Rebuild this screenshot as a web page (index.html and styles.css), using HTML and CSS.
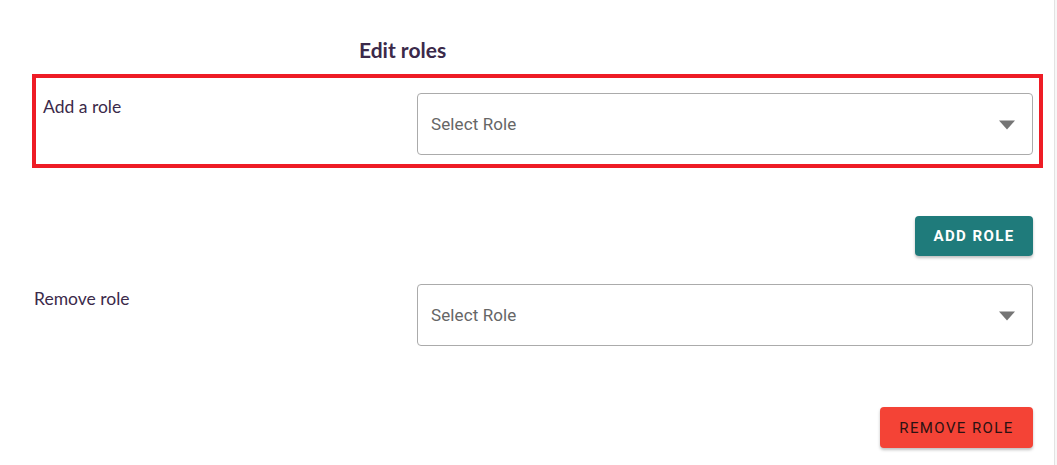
FILE: index.html
```html
<!DOCTYPE html>
<html lang="en">
<head>
<meta charset="utf-8">
<title>Edit roles</title>
<link rel="stylesheet" href="styles.css">
</head>
<body>
<div class="page">
  <h2 class="title">Edit roles</h2>

  <div class="row row-highlight">
    <label class="label">Add a role</label>
    <div class="select">
      <span class="placeholder">Select Role</span>
      <svg class="arrow" width="18" height="10" viewBox="0 0 18 10"><path d="M1 0.5 H17 L9 9.5 Z" fill="#757575"/></svg>
    </div>
  </div>

  <div class="actions actions-add">
    <button class="btn btn-add">Add role</button>
  </div>

  <div class="row">
    <label class="label">Remove role</label>
    <div class="select">
      <span class="placeholder">Select Role</span>
      <svg class="arrow" width="18" height="10" viewBox="0 0 18 10"><path d="M1 0.5 H17 L9 9.5 Z" fill="#757575"/></svg>
    </div>
  </div>

  <div class="actions actions-remove">
    <button class="btn btn-remove">Remove role</button>
  </div>
</div>
</body>
</html>
```

FILE: styles.css
```css
html, body {
  margin: 0;
  padding: 0;
  background: #f7f7f7;
}

.page {
  width: 1055px;
  height: 465px;
  box-sizing: border-box;
  background: #ffffff;
  border-right: 1px solid #e2e2e2;
  padding: 0 22px 0 34px;
  font-family: Lato, "Noto Sans", sans-serif;
  color: #3b2a4a;
}

.title {
  margin: 0;
  padding: 37px 0 0 325px;
  font-size: 21px;
  line-height: 25px;
  font-weight: 700;
  color: #3b2a4a;
  height: 37px;
}

.row {
  display: grid;
  grid-template-columns: 383px 616px;
  align-items: start;
}

.row-highlight {
  margin-left: -2px;
  width: 1011px;
  box-sizing: border-box;
  border: 4px solid #ee1c25;
  padding: 15px 6px 9px 7px;
  grid-template-columns: 374px 616px;
}

.label {
  font-size: 17.5px;
  line-height: 24px;
  padding-top: 2px;
}

.row:not(.row-highlight) .label {
  padding-top: 3px;
}

.select {
  height: 62px;
  box-sizing: border-box;
  border: 1px solid #ababab;
  border-radius: 4px;
  display: flex;
  align-items: center;
  justify-content: space-between;
  padding: 0 16px 0 13px;
  background: #fff;
}

.placeholder {
  font-family: Roboto, "Noto Sans", sans-serif;
  font-size: 17px;
  letter-spacing: 0.1px;
  color: #666666;
}

.arrow {
  display: block;
  margin-top: 2px;
}

.actions {
  display: flex;
  justify-content: flex-end;
  width: 999px;
}

.actions-add {
  padding-top: 48px;
  height: 40px;
  margin-bottom: 28px;
}

.actions-remove {
  padding-top: 61px;
}

.btn {
  font-family: Roboto, "Noto Sans", sans-serif;
  text-transform: uppercase;
  font-size: 15px;
  letter-spacing: 1.4px;
  border: none;
  border-radius: 4px;
  box-shadow: 0 2px 3px rgba(0, 0, 0, 0.25);
  cursor: pointer;
  padding: 0;
}

.btn-add {
  background: #1f7b7b;
  color: #ffffff;
  font-weight: 700;
  width: 118px;
  height: 40px;
}

.btn-remove {
  background: #f44336;
  color: #2b1212;
  font-weight: 400;
  width: 153px;
  height: 41px;
}
```
